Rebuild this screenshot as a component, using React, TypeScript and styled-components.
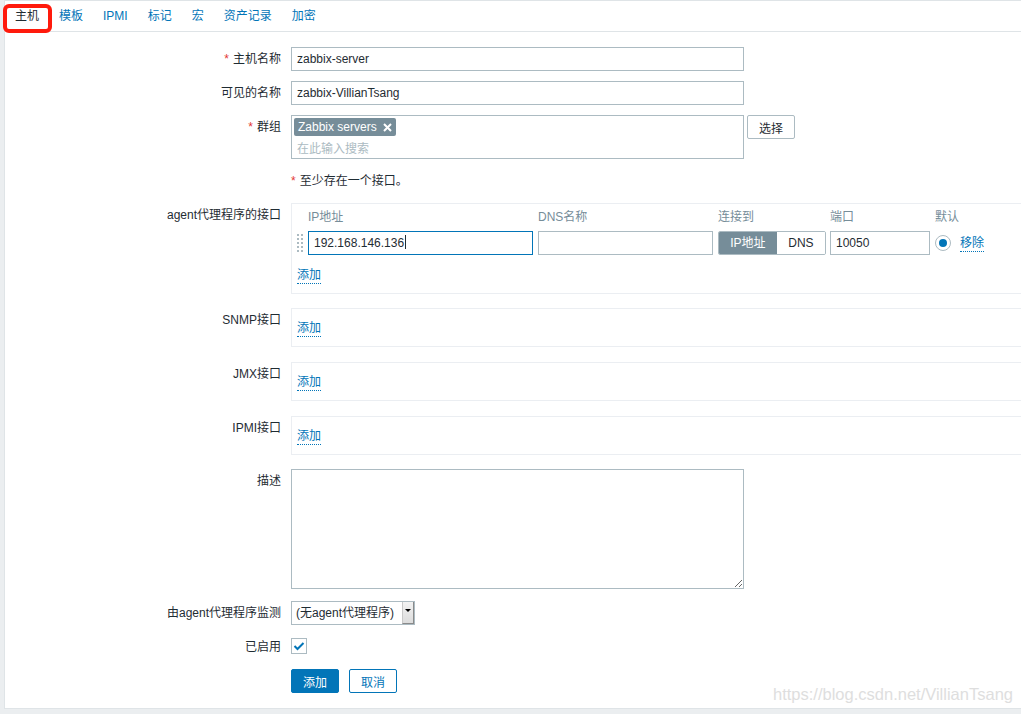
import React from "react";
import styled, { createGlobalStyle } from "styled-components";

const Global = createGlobalStyle`
  html, body { margin: 0; padding: 0; }
  body {
    background: #ebeef0;
    font-family: "Liberation Sans", Arial, "Noto Sans CJK SC", sans-serif;
    font-size: 12px;
    color: #1f2c33;
    overflow: hidden;
  }
  * { box-sizing: border-box; }
`;

const Page = styled.div`
  position: relative;
  width: 1021px;
  height: 714px;
  overflow: hidden;
`;

const Container = styled.div`
  margin-left: 4px;
  margin-right: -20px;
  background: #fff;
  border: 1px solid #dfe4e7;
  padding-bottom: 15px;
`;

const TabBar = styled.div`
  display: flex;
  height: 31px;
  border-bottom: 1px solid #dfe4e7;
`;

const Tab = styled.span<{ $active?: boolean }>`
  padding: 0 10px;
  line-height: 30px;
  color: ${(p) => (p.$active ? "#1f2c33" : "#0275b8")};
`;

const Form = styled.div`
  padding-top: 15px;
`;

const Row = styled.div<{ $mt?: number }>`
  display: flex;
  align-items: flex-start;
  gap: 10px;
  margin-top: ${(p) => p.$mt ?? 0}px;
`;

const Label = styled.div`
  width: 276px;
  flex: none;
  text-align: right;
  line-height: 24px;
  white-space: nowrap;
`;

const Req = styled.span`
  color: #e33734;
  margin-right: 4px;
`;

const TextBox = styled.div<{ $w: number; $focus?: boolean }>`
  width: ${(p) => p.$w}px;
  height: 24px;
  border: 1px solid ${(p) => (p.$focus ? "#0275b8" : "#acbbc2")};
  background: #fff;
  padding: 0 5px;
  line-height: 22px;
  white-space: nowrap;
  flex: none;
`;

const Caret = styled.span`
  display: inline-block;
  width: 1px;
  height: 14px;
  background: #1f2c33;
  vertical-align: -2px;
  margin-left: 1px;
`;

const FieldGroup = styled.div`
  display: flex;
  align-items: flex-start;
  gap: 3px;
`;

const MultiSelect = styled.div`
  width: 453px;
  height: 44px;
  border: 1px solid #acbbc2;
  padding: 2px 2px 0 2px;
`;

const Chip = styled.span`
  display: inline-flex;
  align-items: center;
  gap: 6px;
  height: 18px;
  padding: 0 4px;
  background: #768d99;
  color: #fff;
  border-radius: 2px;
`;

const Placeholder = styled.div`
  color: #acbbc2;
  padding-left: 3px;
  line-height: 20px;
  margin-top: 3px;
`;

const GreyButton = styled.button`
  height: 24px;
  width: 48px;
  padding: 0;
  background: #fff;
  border: 1px solid #acbbc2;
  border-radius: 2px;
  font: inherit;
  color: #1f2c33;
`;

const Hint = styled.div`
  line-height: 24px;
`;

const IfaceBox = styled.div<{ $pt?: number }>`
  flex: 1;
  border: 1px solid #ebeef2;
  padding: ${(p) => p.$pt ?? 11}px 0 9px 5px;
`;

const IfaceGrid = styled.div`
  display: grid;
  grid-template-columns: 6px 225px 175px 107px 100px 20px auto;
  column-gap: 5px;
  align-items: center;
  justify-content: start;
`;

const HeadCell = styled.div`
  color: #768d99;
  line-height: 24px;
  margin-bottom: 2px;
  white-space: nowrap;
`;

const Handle = styled.svg`
  display: block;
`;

const Toggle = styled.div`
  display: flex;
  width: 108px;
  height: 24px;
  border: 1px solid #acbbc2;
  border-radius: 2px;
  overflow: hidden;
`;

const ToggleSeg = styled.span<{ $on?: boolean; $w: number }>`
  width: ${(p) => p.$w}px;
  text-align: center;
  line-height: 22px;
  background: ${(p) => (p.$on ? "#768d99" : "#fff")};
  color: ${(p) => (p.$on ? "#fff" : "#1f2c33")};
`;

const Radio = styled.span`
  width: 16px;
  height: 16px;
  border: 1px solid #acbbc2;
  border-radius: 50%;
  display: flex;
  align-items: center;
  justify-content: center;
  &::after {
    content: "";
    width: 8px;
    height: 8px;
    border-radius: 50%;
    background: #0275b8;
  }
`;

const LinkText = styled.span`
  color: #0275b8;
  border-bottom: 1px dotted #0275b8;
  line-height: 16px;
  display: inline-block;
  white-space: nowrap;
  justify-self: start;
`;

const AddWrap = styled.div<{ $mt?: number }>`
  margin-top: ${(p) => p.$mt ?? 0}px;
  line-height: 0;
`;

const TextArea = styled.textarea`
  width: 453px;
  height: 120px;
  border: 1px solid #acbbc2;
  font: inherit;
  padding: 4px 5px;
  display: block;
`;

const Select = styled.div`
  display: flex;
  width: 124px;
  height: 24px;
  border: 1px solid #acbbc2;
  background: #fff;
`;

const SelectText = styled.span`
  flex: 1;
  padding-left: 4px;
  line-height: 22px;
  white-space: nowrap;
`;

const SelectArrow = styled.span`
  width: 12px;
  background: linear-gradient(#f2f2f2, #dcdcdc);
  border-left: 1px solid #c8c8c8;
  border-right: 1px solid #8a8a8a;
  border-bottom: 1px solid #8a8a8a;
  display: flex;
  justify-content: center;
  padding-top: 7px;
  &::after {
    content: "";
    width: 0;
    height: 0;
    border-left: 3px solid transparent;
    border-right: 3px solid transparent;
    border-top: 3px solid #000;
  }
`;

const CheckBox = styled.span`
  width: 16px;
  height: 16px;
  margin-top: 3px;
  border: 1px solid #acbbc2;
  display: flex;
  align-items: center;
  justify-content: center;
  background: #fff;
`;

const Actions = styled.div`
  display: flex;
  gap: 10px;
`;

const Button = styled.button<{ $primary?: boolean }>`
  height: 24px;
  width: 48px;
  border-radius: 2px;
  font: inherit;
  border: 1px solid #0275b8;
  background: ${(p) => (p.$primary ? "#0275b8" : "#fff")};
  color: ${(p) => (p.$primary ? "#fff" : "#0275b8")};
  padding: 0;
`;

const Annotation = styled.div`
  position: absolute;
  left: 3px;
  top: 4px;
  width: 49px;
  height: 29px;
  border: 4px solid #ff1a0c;
  border-radius: 6px;
  pointer-events: none;
`;

const Watermark = styled.div`
  position: absolute;
  right: 8px;
  top: 685px;
  font-size: 16.5px;
  color: #dedede;
  font-family: "Liberation Sans", Arial, sans-serif;
`;

const DragHandle = () => (
  <Handle width="6" height="20" viewBox="0 0 6 20">
    {[0, 4, 8, 12, 16].map((y) =>
      [0, 4].map((x) => (
        <rect key={`${x}-${y}`} x={x} y={y + 1} width="2" height="2" fill="#acbbc2" />
      ))
    )}
  </Handle>
);

const AddLink = ({ mt }: { mt?: number }) => (
  <AddWrap $mt={mt}>
    <LinkText>添加</LinkText>
  </AddWrap>
);

const tabs = ["主机", "模板", "IPMI", "标记", "宏", "资产记录", "加密"];

export default function App() {
  return (
    <Page>
      <Global />
      <Container>
        <TabBar>
          {tabs.map((t, i) => (
            <Tab key={t} $active={i === 0}>
              {t}
            </Tab>
          ))}
        </TabBar>
        <Form>
          <Row>
            <Label>
              <Req>*</Req>主机名称
            </Label>
            <TextBox $w={453}>zabbix-server</TextBox>
          </Row>
          <Row $mt={10}>
            <Label>可见的名称</Label>
            <TextBox $w={453}>zabbix-VillianTsang</TextBox>
          </Row>
          <Row $mt={10}>
            <Label>
              <Req>*</Req>群组
            </Label>
            <FieldGroup>
              <MultiSelect>
                <Chip>
                  Zabbix servers
                  <svg width="9" height="9" viewBox="0 0 9 9">
                    <path d="M1 1 L8 8 M8 1 L1 8" stroke="#fff" strokeWidth="2" />
                  </svg>
                </Chip>
                <Placeholder>在此输入搜索</Placeholder>
              </MultiSelect>
              <GreyButton>选择</GreyButton>
            </FieldGroup>
          </Row>
          <Row $mt={10}>
            <Label />
            <Hint>
              <Req>*</Req>至少存在一个接口。
            </Hint>
          </Row>
          <Row $mt={10}>
            <Label>agent代理程序的接口</Label>
            <IfaceBox $pt={1}>
              <IfaceGrid>
                <span />
                <HeadCell>IP地址</HeadCell>
                <HeadCell>DNS名称</HeadCell>
                <HeadCell>连接到</HeadCell>
                <HeadCell>端口</HeadCell>
                <HeadCell>默认</HeadCell>
                <span />
                <DragHandle />
                <TextBox $w={225} $focus>
                  192.168.146.136
                  <Caret />
                </TextBox>
                <TextBox $w={175} />
                <Toggle>
                  <ToggleSeg $on $w={59}>
                    IP地址
                  </ToggleSeg>
                  <ToggleSeg $w={49}>DNS</ToggleSeg>
                </Toggle>
                <TextBox $w={100}>10050</TextBox>
                <Radio />
                <LinkText>移除</LinkText>
              </IfaceGrid>
              <AddLink mt={12} />
            </IfaceBox>
          </Row>
          <Row $mt={14}>
            <Label>SNMP接口</Label>
            <IfaceBox>
              <AddLink />
            </IfaceBox>
          </Row>
          <Row $mt={15}>
            <Label>JMX接口</Label>
            <IfaceBox>
              <AddLink />
            </IfaceBox>
          </Row>
          <Row $mt={15}>
            <Label>IPMI接口</Label>
            <IfaceBox>
              <AddLink />
            </IfaceBox>
          </Row>
          <Row $mt={14}>
            <Label>描述</Label>
            <TextArea readOnly value="" />
          </Row>
          <Row $mt={12}>
            <Label>由agent代理程序监测</Label>
            <Select>
              <SelectText>(无agent代理程序)</SelectText>
              <SelectArrow />
            </Select>
          </Row>
          <Row $mt={10}>
            <Label>已启用</Label>
            <CheckBox>
              <svg width="12" height="10" viewBox="0 0 12 10">
                <path d="M1.5 5 L4.5 8 L10.5 2" stroke="#0275b8" strokeWidth="2" fill="none" />
              </svg>
            </CheckBox>
          </Row>
          <Row $mt={10}>
            <Label />
            <Actions>
              <Button $primary>添加</Button>
              <Button>取消</Button>
            </Actions>
          </Row>
        </Form>
      </Container>
      <Annotation />
      <Watermark>https://blog.csdn.net/VillianTsang</Watermark>
    </Page>
  );
}
